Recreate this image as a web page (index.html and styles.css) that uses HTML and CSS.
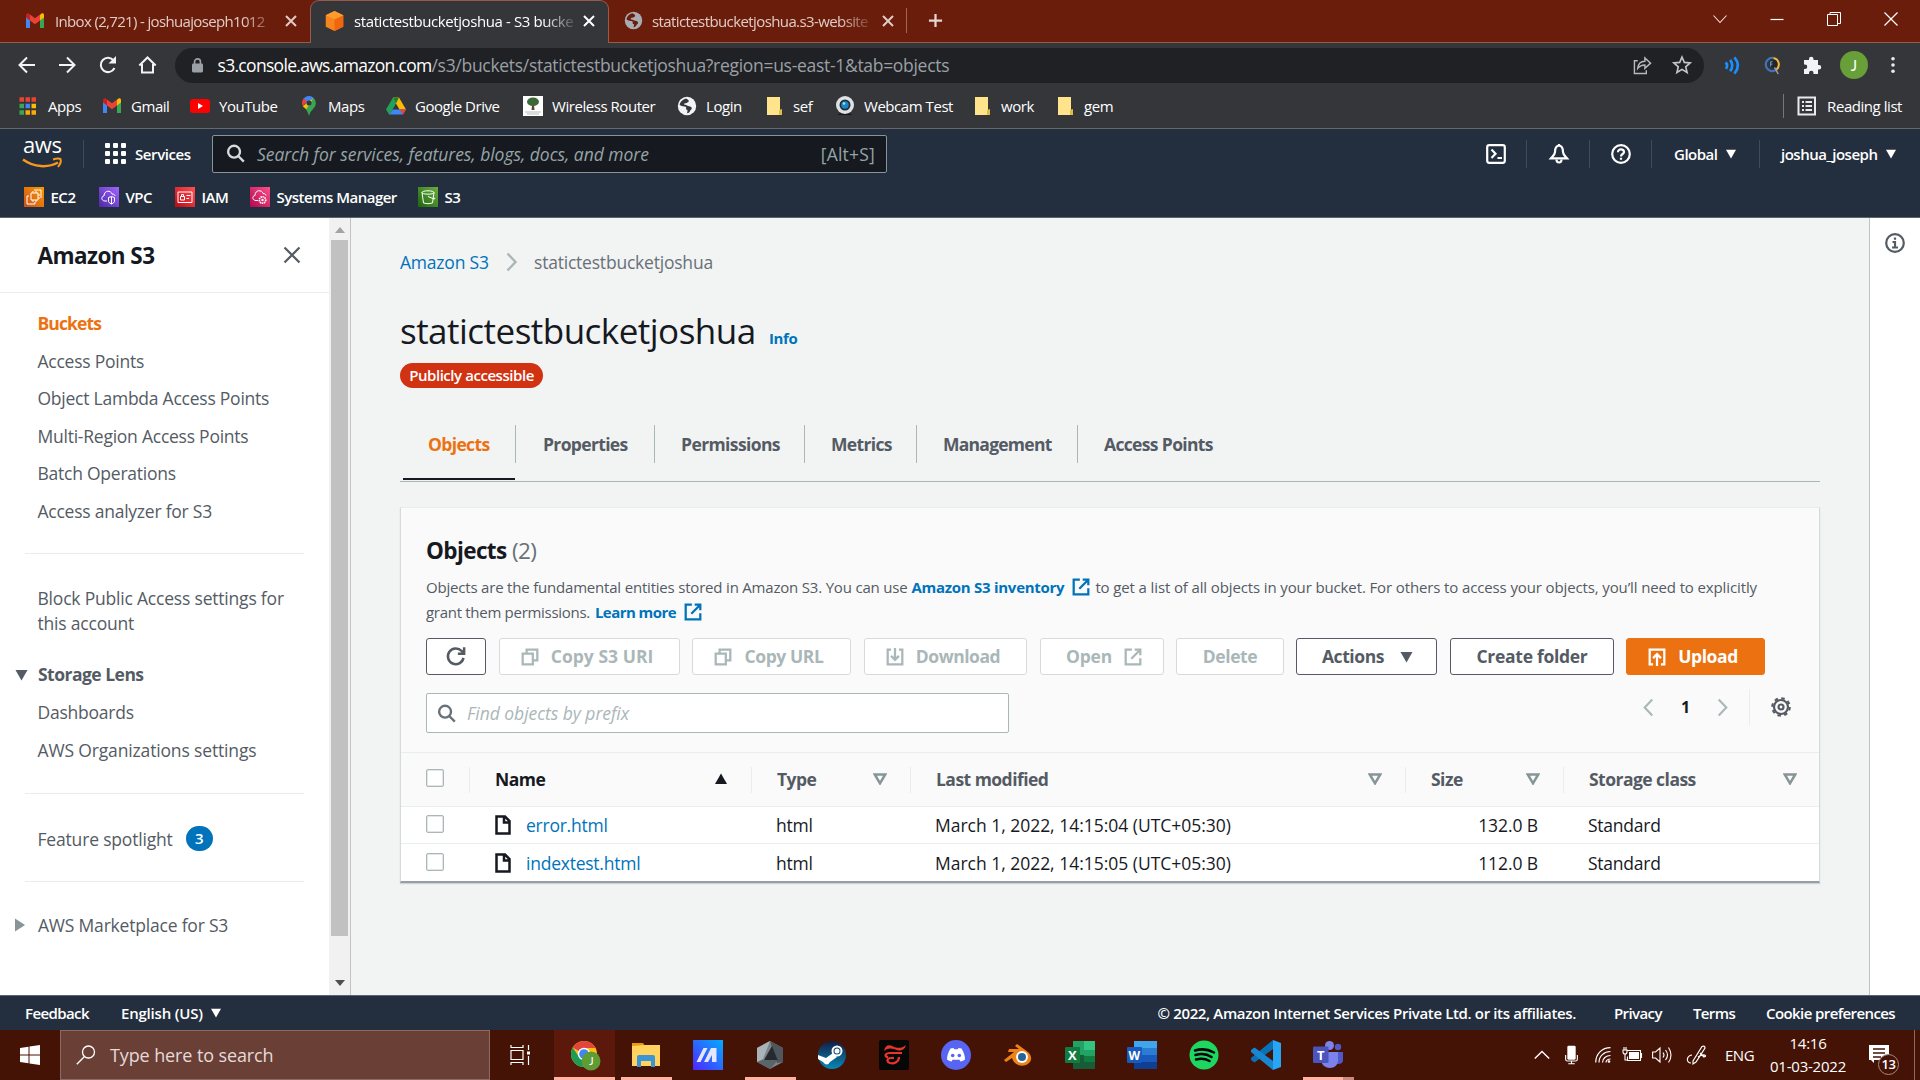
FILE: index.html
```html
<!DOCTYPE html>
<html lang="en">
<head>
<meta charset="utf-8">
<title>statictestbucketjoshua - S3 bucket</title>
<link rel="stylesheet" href="styles.css">
</head>
<body>
<svg class="defs" aria-hidden="true">
  <symbol id="globe" viewBox="0 0 20 20"><circle cx="10" cy="10" r="9.200" fill="currentColor"/><path d="M9 2.400C5.500 3.200 3 5.800 2.600 9c1.600 1 3.400 1.600 5.200 1.400 1.300 0 1.700 1 1.300 2-.3 1 .3 1.300 1.300 1.300.3 1-.1 2.400-.4 3.600 2-.2 3-1.600 3.400-3 .9-.6 1.600-1.300 1.300-2.500-.5-1.500-2.300-1.300-3.700-1.800C9.800 9.500 8.500 8.700 7 8.600c0-1.500 1.400-1.500 2.500-1.700C10.600 6.600 12 6 11.700 4.500 11.500 3.500 10 3.400 9 2.400z" fill="var(--hole)"/></symbol>
  <symbol id="gmail" viewBox="0 0 20 16"><path d="M1 2v13h4V6z" fill="#4285f4"/><path d="M15 6v9h4V2z" fill="#34a853"/><path d="M15 2v5.500l4-3V2c0-2-2-2.200-3-1.300z" fill="#fbbc04"/><path d="M5 1.500v6l5 3.800 5-3.800v-6l-5 3.800z" fill="#ea4335"/><path d="M1 2.500v2l4 3v-6l-1-.8C3-.2 1 .2 1 2.500z" fill="#c5221f"/></symbol>
  <symbol id="folder" viewBox="0 0 20 20"><path d="M3 1h13v13l2 1v4H3z" fill="#ffe48c"/><path d="M15 19v-5l3-1v6z" fill="#e3bd42"/></symbol>
  <symbol id="ext" viewBox="0 0 16 16"><path d="M7 1.500H1.500v13h13V9M9.500 1.500h5v5M14 2 6.500 9.500" fill="none" stroke="currentColor" stroke-width="2"/></symbol>
  <symbol id="copy" viewBox="0 0 16 16"><path d="M1.500 5h9v9.500h-9zM5 5V1.500h9.500V11H11" fill="none" stroke="currentColor" stroke-width="2"/></symbol>
  <symbol id="glass" viewBox="0 0 16 16"><circle cx="6.800" cy="6.500" r="5" fill="none" stroke="currentColor" stroke-width="2"/><path d="m10.500 10.300 4.500 4.500" stroke="currentColor" stroke-width="2"/></symbol>
  <symbol id="file" viewBox="0 0 16 20"><path d="M1.500 1.500h8.500l4.500 4.500v12.500h-13zM9 2v5.500h5.500" fill="none" stroke="currentColor" stroke-width="2.500"/></symbol>
  <symbol id="sort" viewBox="0 0 14 12"><path d="M1.800 1.500h10.400L7 10.300z" fill="none" stroke="#879596" stroke-width="2.500"/></symbol>
  <symbol id="caret" viewBox="0 0 12 12"><path d="M0 1h12L6 11.500z" fill="currentColor"/></symbol>
  <symbol id="cross" viewBox="0 0 12 12"><path d="m1 1 10 10M11 1 1 11" stroke="currentColor" stroke-width="2" fill="none"/></symbol>
</svg>

<header class="tabstrip">
  <div class="tab first"><svg class="fav" viewBox="0 0 20 16"><use href="#gmail"/></svg><span class="tab-title">Inbox (2,721) - joshuajoseph1012</span><svg class="x"><use href="#cross"/></svg></div>
  <div class="tab active"><svg class="cube" viewBox="0 0 21 24"><path d="M10.500 0 21 5v14l-10.500 5L0 19V5z" fill="#f6851f"/><path d="m10.500 10 10.500-5v14l-10.500 5z" fill="#f1660d"/><path d="M10.500 0 21 5l-10.500 5L0 5z" fill="#ff9c2b"/></svg><span class="tab-title">statictestbucketjoshua - S3 bucke</span><svg class="x"><use href="#cross"/></svg></div>
  <div class="tab last"><svg class="fav globe"><use href="#globe"/></svg><span class="tab-title">statictestbucketjoshua.s3-website</span><svg class="x"><use href="#cross"/></svg></div>
  <svg class="plus" viewBox="0 0 16 16"><path d="M8 1v14M1 8h14" stroke="#e6d5d1" stroke-width="2.400"/></svg>
  <div class="window">
    <svg viewBox="0 0 14 14"><path d="m.5 3.500 6.500 7 6.500-7" fill="none" stroke="#f3e3df" stroke-width="1.100"/></svg>
    <svg viewBox="0 0 14 14"><path d="M.5 7.500h13" stroke="#fff" stroke-width="1.200"/></svg>
    <svg viewBox="0 0 14 14"><path d="M.5 2.500h10v11H.5zM3 2.500v-2h10.500v11H11" fill="none" stroke="#fff"/></svg>
    <svg viewBox="0 0 14 14"><path d="m.5.5 13 13m0-13-13 13" fill="none" stroke="#fff" stroke-width="1.200"/></svg>
  </div>
</header>

<div class="toolbar">
  <svg class="tool" viewBox="0 0 20 20"><path d="M18 10H3m7-7.500L2.500 10l7.500 7.500" fill="none" stroke="currentColor" stroke-width="2"/></svg>
  <svg class="tool" viewBox="0 0 20 20"><path d="M2 10h15m-7-7.500 7.500 7.500-7.500 7.500" fill="none" stroke="currentColor" stroke-width="2"/></svg>
  <svg class="tool" viewBox="0 0 20 20"><path d="M17.500 13a7.200 7.200 0 1 1-.8-7.500" fill="none" stroke="currentColor" stroke-width="2"/><path d="M19 1v7.500h-7.500z" fill="currentColor"/></svg>
  <svg class="tool" viewBox="0 0 20 20"><path d="M5 9v8.500h11V9M2.300 10.500l8.200-8 8.200 8" fill="none" stroke="currentColor" stroke-width="2"/></svg>
  <div class="omnibox">
    <svg class="lock" viewBox="0 0 12 16"><path d="M2.800 7V4a3.200 3.200 0 0 1 6.400 0v3" fill="none" stroke="#9aa0a6" stroke-width="1.800"/><rect y="5.800" width="12" height="9.800" rx="1.500" fill="#9aa0a6"/></svg>
    <span class="host">s3.console.aws.amazon.com</span><span class="path">/s3/buckets/statictestbucketjoshua?region=us-east-1&amp;tab=objects</span>
    <svg class="share" viewBox="0 0 20 20"><path d="M5 5H1.500v13.500H14V15" fill="none" stroke="#b6b8ba" stroke-width="1.500"/><path d="M5 13c.5-5 3.500-7.500 7.500-7.500V2l6 5.500-6 5.500V9.500C9 9.500 7 10.500 5 13z" fill="none" stroke="#b6b8ba" stroke-width="1.500"/></svg>
    <svg class="star" viewBox="0 0 20 20"><path d="m10 2 2.300 5.400 5.900.5-4.500 3.900 1.400 5.700-5.100-3.100-5.100 3.100 1.400-5.700L1.800 7.900l5.900-.5z" fill="none" stroke="#c4c6c8" stroke-width="1.600"/></svg>
  </div>
  <svg class="wave" viewBox="0 0 18 20"><path d="M2 6.500q2.500 3.500 0 7M6.500 4q4.500 6 0 12M11 1.500q7.500 8.500 0 17" fill="none" stroke="#1a90ff" stroke-width="2.800"/></svg>
  <svg class="quill" viewBox="0 0 18 20"><path d="M9 2a7 7 0 1 0 3 12.500" fill="none" stroke="#4272b8" stroke-width="2.200"/><path d="M9 2a6.500 7 0 0 1 3 12.500" fill="none" stroke="#f5b83d" stroke-width="2.200"/><circle cx="9" cy="8.500" r="4.200" fill="#24262d"/><path d="M6 6v5m0-5h2M6 8.500h2" stroke="#57b2e4" fill="none"/><path d="m10 12 4 7" stroke="#9aa1a8" stroke-width="1.500"/></svg>
  <svg class="puzzle" viewBox="0 0 20 20"><path d="M2 5h5V4a2.200 2.200 0 0 1 4.500 0v1H16v5h1a2.200 2.200 0 0 1 0 4.500h-1V19h-4.500v-1a2 2 0 0 0-4.500 0v1H2v-5h1a2 2 0 0 0 0-4.500H2z" fill="#f1f3f4"/></svg>
  <span class="avatar">J</span>
  <svg class="dots" viewBox="0 0 6 20"><g fill="#e8eaed"><circle cx="3" cy="3" r="2"/><circle cx="3" cy="10" r="2"/><circle cx="3" cy="17" r="2"/></g></svg>
</div>

<nav class="bookmarks">
  <a><svg viewBox="0 0 20 20"><g stroke-width="4.500"><path d="M.5 3.500H5m1.500 0H11m1.500 0H17" stroke="#ea4335"/><path d="M.5 10H5" stroke="#34a853"/><path d="M6.500 10H11" stroke="#4285f4"/><path d="M12.500 10H17" stroke="#fbbc04"/><path d="M.5 16.500H5" stroke="#34a853"/><path d="M6.500 16.500H11m1.500 0H17" stroke="#fbab04"/></g></svg>Apps</a>
  <a><svg viewBox="0 0 20 16"><use href="#gmail"/></svg>Gmail</a>
  <a><svg viewBox="0 0 20 20"><rect y="3" width="20" height="14" rx="3" fill="#f00"/><path d="m8 7 5 3-5 3z" fill="#fff"/></svg>YouTube</a>
  <a><svg viewBox="0 0 20 20"><path d="M10 0c2 0 3.500.7 4.700 2.100L8 10 4 4A7 7 0 0 1 10 0z" fill="#4285f4"/><path d="M3.800 10 14.700 2.100 8 14C6 12 4.500 11.500 3.800 10z" fill="#fbbc04"/><path d="M14.700 2.100C17 4.500 17.500 8 16 10.500c-2 3-5 5-6 9.500-.7-2.500-1.500-4.500-3-6.500z" fill="#34a853"/><path d="M4.700 2.500 8 5.300 3.800 10a7 7 0 0 1 .9-7.500z" fill="#ea4335"/><circle cx="10" cy="7" r="2.500" fill="#35363a"/></svg>Maps</a>
  <a><svg viewBox="0 0 20 20"><path d="m7 1.500-7 12L3.500 19 10 7.500z" fill="#23a15a"/><path d="M7 1.500h6L20 13.500h-6.500L10 7.500z" fill="#fbbc04"/><path d="m3.500 18.500 3.300-5H20l-3.300 5z" fill="#4285f4"/><path d="m13.500 13.500 3.500 5 3-5z" fill="#ea4335"/><path d="M7 1.500h6l-3 6z" fill="#188038"/></svg>Google Drive</a>
  <a><svg viewBox="0 0 20 20"><rect width="20" height="20" fill="#fff"/><path d="M9.300 8h1.500l.8 6H8.500z" fill="#5c4632"/><ellipse cx="10" cy="5.700" rx="6" ry="4.300" fill="#3d6937"/><path d="M2 16h16M4 18h12" stroke="#b8b8b8"/></svg>Wireless Router</a>
  <a><svg class="login"><use href="#globe"/></svg>Login</a>
  <a><svg><use href="#folder"/></svg>sef</a>
  <a><svg viewBox="0 0 20 20"><path d="M2 19q8-5 16 0z" fill="#14171a"/><circle cx="10" cy="9" r="9" fill="#dfe2e4"/><circle cx="10" cy="9" r="5.500" fill="#252b33"/><circle cx="10" cy="9" r="3.800" fill="#1686c4"/><circle cx="9" cy="7.500" r="1.300" fill="#a7dcf5"/></svg>Webcam Test</a>
  <a><svg><use href="#folder"/></svg>work</a>
  <a><svg><use href="#folder"/></svg>gem</a>
  <a class="reading"><svg viewBox="0 0 20 20"><rect x="1.500" y="1.500" width="16.500" height="17" fill="none" stroke="#e8eaed" stroke-width="2"/><path d="M5 6h2m1.500 0H15M5 10h2m1.500 0H15M5 14h2m1.500 0H15" stroke="#e8eaed" stroke-width="2"/></svg>Reading list</a>
</nav>

<div class="aws-nav">
  <div class="aws-top">
    <div class="aws-logo"><span>aws</span><svg viewBox="0 0 40 11"><path d="M1 1.500C12 9.500 26 10 36 4.500" fill="none" stroke="#f7981d" stroke-width="2.500"/><path d="M31 1.500c3-1 6-1.300 7.500-.5.800 2-.5 5.500-2.500 8" fill="none" stroke="#f7981d" stroke-width="2"/></svg></div>
    <svg class="grid9" viewBox="0 0 21 21"><g fill="#fff"><rect width="5" height="5" rx="1"/><rect x="8" width="5" height="5" rx="1"/><rect x="16" width="5" height="5" rx="1"/><rect y="8" width="5" height="5" rx="1"/><rect x="8" y="8" width="5" height="5" rx="1"/><rect x="16" y="8" width="5" height="5" rx="1"/><rect y="16" width="5" height="5" rx="1"/><rect x="8" y="16" width="5" height="5" rx="1"/><rect x="16" y="16" width="5" height="5" rx="1"/></g></svg>
    <span class="services">Services</span>
    <div class="aws-search"><svg><use href="#glass"/></svg><i>Search for services, features, blogs, docs, and more</i><span>[Alt+S]</span></div>
    <div class="cell c1"><svg viewBox="0 0 20 20"><rect x="1.200" y="1.200" width="17.600" height="17.600" rx="2" fill="none" stroke="#fff" stroke-width="2.200"/><path d="m5.500 5.500 4 4.200-4 4.200M11.500 14H16" fill="none" stroke="#fff" stroke-width="2.200"/></svg></div>
    <div class="cell c2"><svg viewBox="0 0 20 20"><path d="M10 1.500C7 2 6 4.500 6 8c0 2.500-2 4-4 6.300h16C16 12 14 10.500 14 8c0-3.500-1-6-4-6.500z" fill="none" stroke="#fff" stroke-width="2.200"/><path d="M7.500 15.500a2.500 3 0 0 0 5 0M10 0v2" fill="none" stroke="#fff" stroke-width="2.200"/></svg></div>
    <div class="cell c3"><svg viewBox="0 0 20 20"><circle cx="10" cy="10" r="8.800" fill="none" stroke="#fff" stroke-width="2.200"/><path d="M7 8.200C7 4.200 13 4.500 13 8c0 2.200-3 1.800-3 4.500m0 1.300v2" fill="none" stroke="#fff" stroke-width="2.200"/></svg></div>
    <div class="cell c4">Global<svg class="caret"><use href="#caret"/></svg></div>
    <div class="cell c5">joshua_joseph<svg class="caret"><use href="#caret"/></svg></div>
  </div>
  <div class="favorites">
    <a><svg class="ec2" viewBox="0 0 20 20"><path d="M7 6h7v7H7zM9 4v2m3-2v2m-3 7v2m3-2v2m2-7h2m-2 3h2M10 3h7v8M3 9v8h8v-2M3 9h2" fill="none" stroke="#fff"/></svg>EC2</a>
    <a><svg class="vpc" viewBox="0 0 20 20"><path d="M8 14H6c-4 0-4-5-1-5 0-6 7-6 8-2 2 0 3 1 3 2" fill="none" stroke="#fff"/><path d="m12.500 9.500 3 1v4q-1 2-3 2.500-2-.5-3-2.500v-4zM12.500 10v7" fill="none" stroke="#fff"/></svg>VPC</a>
    <a><svg class="iam" viewBox="0 0 20 20"><path d="M3 5h14v10.500H3zM5.500 9.500h4v3.500h-4zM6.500 9V7.500h2V9M11.500 8.500h4m-4 3h2.500" fill="none" stroke="#fff"/></svg>IAM</a>
    <a><svg class="sysm" viewBox="0 0 20 20"><path d="M8 13.500H6c-4 0-4-5-1-5 0-6 7-6 8-2 2 0 3 1 3 2" fill="none" stroke="#fff"/><circle cx="12.500" cy="13" r="3.200" fill="none" stroke="#fff" stroke-width="1.600" stroke-dasharray="1.500 .6"/><circle cx="12.500" cy="13" r="1.200" fill="#fff"/></svg>Systems Manager</a>
    <a><svg class="s3" viewBox="0 0 20 20"><path d="M4 5.500 5.500 16q4.500 1.500 9 0L16 5.500M10 9.500l6 2.500q2-.2 0-1.500" fill="none" stroke="#fff"/><ellipse cx="10" cy="5.500" rx="6" ry="1.700" fill="none" stroke="#fff"/></svg>S3</a>
  </div>
</div>

<div class="content">
  <aside class="sidebar">
    <div class="side-head"><h2>Amazon S3</h2><svg viewBox="0 0 18 18"><path d="m1.500 1.500 15 15m0-15-15 15" stroke="#545b64" stroke-width="2.200"/></svg></div>
    <ul class="links first-links">
      <li class="selected">Buckets</li><li>Access Points</li><li>Object Lambda Access Points</li><li>Multi-Region Access Points</li><li>Batch Operations</li><li>Access analyzer for S3</li>
    </ul>
    <p class="block-access">Block Public Access settings for<br>this account</p>
    <ul class="links">
      <li class="section"><svg><use href="#caret"/></svg>Storage Lens</li><li>Dashboards</li><li class="org">AWS Organizations settings</li>
    </ul>
    <div class="feature">Feature spotlight<span>3</span></div>
    <div class="market"><svg viewBox="0 0 12 14"><path d="M0 0v14l11-7z" fill="#879596"/></svg>AWS Marketplace for S3</div>
  </aside>
  <div class="scrollbar"><svg viewBox="0 0 10 6"><path d="m0 6 5-6 5 6z" fill="#a3a3a3"/></svg><div class="thumb"></div><svg viewBox="0 0 10 6"><path d="m0 0 5 6 5-6z" fill="#505050"/></svg></div>

  <main>
    <div class="crumbs"><a>Amazon S3</a><svg viewBox="0 0 12 20"><path d="m1.500 1.500 8 8.500-8 8.500" fill="none" stroke="#aab7b8" stroke-width="2.400"/></svg><span>statictestbucketjoshua</span></div>
    <div class="title"><h1>statictestbucketjoshua</h1><a>Info</a></div>
    <span class="badge">Publicly accessible</span>
    <div class="page-tabs"><div class="on">Objects</div><div class="w139">Properties</div><div class="w149">Permissions</div><div class="w112">Metrics</div><div class="w161">Management</div><div>Access Points</div></div>

    <section class="panel">
      <div class="panel-head">
        <h3>Objects <span>(2)</span></h3>
        <div class="desc"><span class="d1">Objects are the fundamental entities stored in Amazon S3. You can use</span><a>Amazon S3 inventory</a><svg><use href="#ext"/></svg><span class="d2">to get a list of all objects in your bucket. For others to access your objects, you’ll need to explicitly</span></div>
        <div class="desc second"><span class="d3">grant them permissions.</span><a>Learn more</a><svg><use href="#ext"/></svg></div>
        <div class="buttons">
          <button class="on b-refresh"><svg viewBox="0 0 16 16"><path d="M14 9.500A6.300 6.300 0 1 1 12.500 4L14 5.500M14.500 1v5.200H9.500" fill="none" stroke="currentColor" stroke-width="2"/></svg></button>
          <button class="b-uri"><svg><use href="#copy"/></svg>Copy S3 URI</button>
          <button class="b-url"><svg><use href="#copy"/></svg>Copy URL</button>
          <button class="b-down"><svg viewBox="0 0 16 16"><path d="M4.500 1.500h-3v13h13v-13h-3M8 0v10M4.500 7 8 10.500 11.500 7" fill="none" stroke="currentColor" stroke-width="2"/></svg>Download</button>
          <button class="b-open">Open<svg><use href="#ext"/></svg></button>
          <button class="b-del">Delete</button>
          <button class="on b-act">Actions<svg class="tri"><use href="#caret"/></svg></button>
          <button class="on b-create">Create folder</button>
          <button class="b-upload"><svg viewBox="0 0 16 16"><path d="M4.500 14.500h-3v-13h13v13h-3M8 16V6M4.500 9 8 5.500 11.500 9" fill="none" stroke="currentColor" stroke-width="2"/></svg>Upload</button>
        </div>
        <div class="finder">
          <div class="find"><svg><use href="#glass"/></svg><i>Find objects by prefix</i></div>
          <div class="pager">
            <svg viewBox="0 0 12 20"><path d="m10.500 1.500-8 8.500 8 8.500" fill="none" stroke="#aab7b8" stroke-width="2.200"/></svg>
            <span>1</span>
            <svg viewBox="0 0 12 20"><path d="m1.500 1.500 8 8.500-8 8.500" fill="none" stroke="#aab7b8" stroke-width="2.200"/></svg>
          </div>
          <div class="gear"><svg viewBox="0 0 20 20"><circle cx="10" cy="10" r="7" fill="none" stroke="#545b64" stroke-width="2.200"/><circle cx="10" cy="10" r="8.800" fill="none" stroke="#545b64" stroke-width="2" stroke-dasharray="3.500 3.410"/><circle cx="10" cy="10" r="2.500" fill="none" stroke="#545b64" stroke-width="2.200"/></svg></div>
        </div>
      </div>
      <div class="row head">
        <div class="pick"><span class="box"></span></div>
        <div class="name">Name<svg viewBox="0 0 12 12"><path d="M0 11h12L6 .5z" fill="#16191f"/></svg></div>
        <div>Type<svg><use href="#sort"/></svg></div><div>Last modified<svg><use href="#sort"/></svg></div><div>Size<svg><use href="#sort"/></svg></div><div>Storage class<svg><use href="#sort"/></svg></div>
      </div>
      <div class="row"><div class="pick"><span class="box"></span></div><div class="file"><svg><use href="#file"/></svg><a>error.html</a></div><div>html</div><div class="date">March 1, 2022, 14:15:04 (UTC+05:30)</div><div class="size">132.0 B</div><div>Standard</div></div>
      <div class="row"><div class="pick"><span class="box"></span></div><div class="file"><svg><use href="#file"/></svg><a>indextest.html</a></div><div>html</div><div class="date">March 1, 2022, 14:15:05 (UTC+05:30)</div><div class="size">112.0 B</div><div>Standard</div></div>
    </section>
  </main>
  <aside class="info"><svg viewBox="0 0 20 20"><circle cx="10" cy="10" r="8.800" fill="none" stroke="#545b64" stroke-width="2.200"/><path d="M10 4.500v2.300M7.500 9H10v5.500M7 14.500h6" fill="none" stroke="#545b64" stroke-width="2.200"/></svg></aside>
</div>

<footer class="aws-foot"><span class="f1">Feedback</span><span class="f2">English (US)</span><svg><use href="#caret"/></svg><span class="f3">© 2022, Amazon Internet Services Private Ltd. or its affiliates.</span><span class="f4">Privacy</span><span class="f5">Terms</span><span class="f6">Cookie preferences</span></footer>

<div class="taskbar">
  <div class="start"><svg viewBox="0 0 20 20"><path d="M0 3 8.500 1.800v7.700H0zM9.500 1.600 20 0v9.500H9.500zM0 10.500h8.500v7.700L0 17zM9.500 10.500H20V20L9.500 18.400z" fill="#fff"/></svg></div>
  <div class="win-search"><svg viewBox="0 0 20 20"><circle cx="12.500" cy="7" r="6" fill="none" stroke="#fff" stroke-width="1.300"/><path d="M8.500 11.500.8 19.200" stroke="#fff" stroke-width="1.300"/></svg>Type here to search</div>
  <div class="taskview"><svg viewBox="0 0 20 20"><path d="M1 5.500h12v9H1zM1 0v2.500h12V0M1 20v-2.500h12V20M18.500 0v5M18.500 11v9" fill="none" stroke="#fff" stroke-width="1.200"/><path d="M17 6.500h3v3h-3z" fill="#fff"/></svg></div>
  <div class="app focused"><svg viewBox="0 0 30 30"><circle cx="14" cy="14" r="13" fill="#fbc116"/><path d="M2.700 7.500A13 13 0 0 0 13 27l6.500-10L9 17z" fill="#1c9c54"/><path d="M14 14 2.700 7.500A13 13 0 0 1 25.500 8H14z" fill="#e2453a"/><circle cx="14" cy="14" r="6.200" fill="#fff"/><circle cx="14" cy="14" r="4.800" fill="#4285f4"/><circle cx="21" cy="21" r="9.500" fill="#5f9c35"/><text x="19" y="25" class="svg-j">J</text></svg></div>
  <div class="app run"><svg viewBox="0 0 30 30"><path d="M1 3h11l2 3H1z" fill="#e59d09"/><path d="M1 6l13-1h15v21H1z" fill="#ffd35e"/><path d="M6 26V17q0-2 2-2h14q2 0 2 2v10h-4v-6H10v6H6z" fill="#3b95d4"/></svg></div>
  <div class="app"><svg viewBox="0 0 30 30"><defs><linearGradient id="a" x1="0" y1="1" x2="1" y2="0"><stop stop-color="#5124ff"/><stop offset=".6" stop-color="#2277ff"/><stop offset="1" stop-color="#00adff"/></linearGradient></defs><path fill="url(#a)" d="M0 0h30v30H0z"/><path d="m3.500 22 7-14h4l-7 14zM11 22l7-14h5.500v14H19v-7l-4 7z" fill="#e6e5ff"/></svg></div>
  <div class="app run"><svg viewBox="0 0 30 30"><path d="M15 1 28 8v14l-13 7-13-7V8z" fill="#7b858c"/><path d="M15 1 28 8v14l-6 1z" fill="#4e575d"/><path d="M2 8 15 1l-7 18-6 3z" fill="#a9b3b9"/><path d="m17 6 6 15-14-1z" fill="#252a2e"/><path d="M8 20h15l-8 9-13-7z" fill="#59646b"/></svg></div>
  <div class="app"><svg viewBox="0 0 30 30"><defs><linearGradient id="s" x2="0" y2="1"><stop stop-color="#151c42"/><stop offset="1" stop-color="#0689b8"/></linearGradient></defs><circle cx="15" cy="15" r="14" fill="url(#s)"/><circle cx="20" cy="11" r="4.500" fill="none" stroke="#fff" stroke-width="2"/><circle cx="20" cy="11" r="2.500" fill="#fff"/><path d="m1 15 8 3 7-5 4 4-7 5q-3 5-7 0L1 19z" fill="#fff"/></svg></div>
  <div class="app"><svg viewBox="0 0 30 30"><rect width="30" height="30" rx="2" fill="#080707"/><path d="M5 11C6 5 10 4 14 6.500c4 2 9 2 13-1.500-1 4-4 6-8 5.500L15 9c-3-1-7-1-10 2z" fill="#e8342a"/><path d="M23 13H11c-5 0-6 4-2 4M20 17c0 5-5 7-9 6-4-1.500-3-5 1-5h3" fill="none" stroke="#e8342a" stroke-width="2.200"/></svg></div>
  <div class="app"><svg viewBox="0 0 30 30"><circle cx="15" cy="15" r="15" fill="#5865f2"/><path d="M9.500 8.500 12.500 8l.7 1.200h3.600l.7-1.200 3 .5c2 3 3.500 7 3.500 11-1.500 1.200-3 1.800-4.500 2l-1-1.800h-7l-1 1.800c-1.500-.2-3-.8-4.500-2 0-4 1.500-8 3.500-11z" fill="#fff"/><circle cx="11.700" cy="15.500" r="1.800" fill="#5865f2"/><circle cx="18.300" cy="15.500" r="1.800" fill="#5865f2"/></svg></div>
  <div class="app"><svg viewBox="0 0 30 30"><path d="m1 20 10-8H5l1-3h10l-4-3 2-2 11 8c4 4 4 8 1 11-5 5-15 3-17-5l-6 4z" fill="#ef8216"/><circle cx="19" cy="17" r="6" fill="#fff"/><circle cx="19" cy="17" r="4" fill="#2a6396"/></svg></div>
  <div class="app"><svg viewBox="0 0 30 30"><path d="M8 1h11v28H8z" fill="#21a366"/><path d="M19 1h11v9H19z" fill="#33c481"/><path d="M8 15h22v14H8z" fill="#185c37"/><path d="M19 10h11v6H19z" fill="#21a366"/><path d="M19 16h11v6H19z" fill="#107c41"/><rect y="7" width="15" height="16" rx="1" fill="#107c41"/><text x="3" y="20" class="svg-l">X</text></svg></div>
  <div class="app"><svg viewBox="0 0 30 30"><path d="M7 1h23v7H7z" fill="#41a5ee"/><path d="M7 8h23v7H7z" fill="#2b7cd3"/><path d="M7 15h23v7H7z" fill="#185abd"/><path d="M7 22h23v7H7z" fill="#103f91"/><rect y="7" width="15" height="16" rx="1" fill="#185abd"/><text x="1.500" y="19.500" class="svg-l w">W</text></svg></div>
  <div class="app"><svg viewBox="0 0 30 30"><circle cx="15" cy="15" r="14.500" fill="#1ed760"/><path d="M6 10.500q10-3 19 2M6.500 15q9-2.500 16 2M7 19.500q7.500-2 13.500 1.500" fill="none" stroke="#000" stroke-width="2.500" stroke-linecap="round"/></svg></div>
  <div class="app"><svg viewBox="0 0 30 30"><path d="M22 0v9L3.500 22.500 0 20v-2z" fill="#0b71b7"/><path d="M0 10 3.500 7.500 22 21v9L0 12z" fill="#1887d1"/><path d="m22 0 8 3v24l-8 3z" fill="#28a5f5"/></svg></div>
  <div class="app run two"><svg viewBox="0 0 30 30"><circle cx="25" cy="7" r="3.200" fill="#5059c9"/><path d="M20 12h10v8q0 4-5 4h-5z" fill="#5059c9"/><circle cx="16.500" cy="5.500" r="4.500" fill="#7b83eb"/><path d="M8 12h17v9q-1 7-8 7t-9-7z" fill="#7b83eb"/><rect y="6.500" width="15.500" height="16.500" rx="1" fill="#4b53bc"/><text x="4" y="19.500" class="svg-l">T</text></svg></div>
  <div class="tray">
    <svg class="t1" viewBox="0 0 16 10"><path d="m.8 8.500 7.200-7 7.200 7" fill="none" stroke="#fff" stroke-width="1.400"/></svg>
    <svg class="t2" viewBox="0 0 14 20"><rect x="2.500" width="9" height="15" rx="1.500" fill="#fff"/><path d="M.7 10v4.500q0 2 2 2h8.600q2 0 2-2V10M7 17v2.500M3.500 19.400h7" fill="none" stroke="#fff" stroke-width="1.200"/></svg>
    <svg class="t3" viewBox="0 0 16 16"><path d="M.7 15.500C.7 7 7 .7 15.500.7M4 15.500C4 9 9 4.500 15.500 4.500M7.500 15.500c0-4 3.500-7 8-7M11 15.500c0-2 2-3.500 4.500-3.500" fill="none" stroke="#fff" stroke-width="1.200"/><circle cx="14" cy="14.500" r="1.300" fill="#fff"/></svg>
    <svg class="t4" viewBox="0 0 20 16"><path d="M5.500 3.500h13v10h-13v-4M18.500 6.500h1v4h-1M1 3h4v2q0 2-2 2T1 5zM2 3V0m2 3V0M3 7v6h3" fill="none" stroke="#fff" stroke-width="1.100"/><path d="M7 5h10v7H7z" fill="#fff"/></svg>
    <svg class="t5" viewBox="0 0 20 18"><path d="M.6 6v6h3L8 16V2L3.500 6zM11 6.500q2 2.500 0 5M13.500 4q4 5 0 10M16.500 1.500q5 7.500 0 15" fill="none" stroke="#fff" stroke-width="1.100"/></svg>
    <svg class="t6" viewBox="0 0 20 20"><path d="M6 16 15 1.500q3-1 3 1.500L9 17l-3 2zM5 10c-6 1-6 8-1 8M11 12c6-4 10-1 6 0l-4-4" fill="none" stroke="#fff" stroke-width="1.200"/></svg>
    <span class="lang">ENG</span>
    <div class="clock"><span>14:16</span><span>01-03-2022</span></div>
    <div class="notice"><svg viewBox="0 0 20 18"><path d="M0 0h20v15H5v3l-3-3H0z" fill="#fff"/><path d="M4 4h12M4 8h12M4 12h8" stroke="#441306" stroke-width="1.400"/></svg><span>13</span></div>
  </div>
</div>
</body>
</html>
```
FILE: styles.css
```css
* { box-sizing: border-box; }
body { margin: 0; width: 1920px; height: 1080px; overflow: hidden; font-family: "Open Sans", "Noto Sans", sans-serif; white-space: nowrap; color: #16191f; }
h1, h2, h3, p, ul { margin: 0; padding: 0; font-weight: 400; }
ul { list-style: none; }
svg { display: block; flex: none; overflow: visible; }
a { text-decoration: none; }
.defs { display: none; }

/* Browser window */
.tabstrip { display: flex; height: 43px; background: #6b1d0b; border-bottom: 1px solid #99594b; font-size: 15px; color: #e0cbc6; }
.tab { display: flex; align-items: center; height: 41px; }
.tab-title { -webkit-mask-image: linear-gradient(90deg, #000 86%, rgba(0, 0, 0, .15)); mask-image: linear-gradient(90deg, #000 86%, rgba(0, 0, 0, .15)); }
.tab .x { width: 12px; height: 12px; margin-left: 11px; }
.tab.first { width: 310px; padding-left: 25px; }
.first .fav { width: 20px; height: 16px; margin-right: 10px; }
.first .tab-title { width: 219px; letter-spacing: -.66px; }
.tab.active { width: 299px; height: 43px; padding: 0 0 2px 13px; background: #35363a; border: 1px solid #99594b; border-bottom: 0; border-radius: 9px 9px 0 0; color: #fff; }
.cube { width: 21px; height: 20px; margin-right: 9px; }
.active .tab-title { width: 220px; letter-spacing: -.4px; }
.active .x { margin-left: 9px; }
.tab.last { width: 298px; padding-left: 15px; }
.globe { width: 19px; height: 19px; margin-right: 9px; color: #a9adb2; --hole: #6b1d0b; }
.last .tab-title { width: 219px; letter-spacing: -.6px; }
.tab.last::after { content: ""; width: 1px; height: 25px; margin-left: 12px; background: #9f6558; }
.plus { width: 15px; height: 15px; margin: 13px 0 0 21px; }
.window { display: flex; align-items: center; gap: 43px; height: 38px; margin-left: auto; padding-right: 22px; }
.window svg { width: 14px; height: 14px; }

.toolbar { display: flex; align-items: center; height: 45px; background: #35363a; padding: 0 0 1px 17px; color: #f1f3f4; }
.tool { width: 20px; height: 20px; margin-right: 20px; }
.omnibox { display: flex; align-items: center; width: 1529px; height: 35px; margin-left: -2px; border-radius: 18px; background: #202124; font-size: 17.500px; }
.lock { width: 11px; height: 15px; margin: 0 14.500px 0 17px; }
.host { width: 214px; color: #fff; letter-spacing: -.69px; }
.path { color: #9aa0a6; letter-spacing: -.3px; }
.share { width: 19px; height: 19px; margin-left: auto; }
.star { width: 20px; height: 20px; margin: 0 12px 0 20px; }
.wave { width: 17px; height: 19px; margin-left: 20px; }
.quill { width: 17px; height: 19px; margin-left: 24px; }
.puzzle { width: 20px; height: 20px; margin-left: 20px; }
.avatar { width: 28px; height: 28px; margin-left: 18px; border-radius: 50%; background: #689f38; color: #fff; font: 15px/28px Lato, sans-serif; text-align: center; }
.dots { width: 6px; height: 18px; margin-left: 22px; }

.bookmarks { display: grid; grid-template-columns: 83px 88px 109px 87px 137px 154px 87px 71px 137px 83px 70px 1fr; align-items: center; height: 41px; padding: 0 0 5px 19px; background: #35363a; border-bottom: 1px solid #66686c; color: #fff; font-size: 15px; letter-spacing: -.45px; }
.bookmarks a { display: flex; align-items: center; gap: 9px; height: 22px; line-height: 20px; }
.bookmarks svg { width: 20px; height: 20px; }
.bookmarks .login { color: #f1f3f4; --hole: #35363a; }
.bookmarks .reading { justify-self: end; gap: 10px; height: 24px; margin-right: 18px; padding-left: 13px; border-left: 1px solid #75777b; }

/* AWS header */
.aws-nav { height: 89px; background: #232f3e; border-bottom: 1px solid #596570; color: #fff; font-size: 15px; font-weight: 600; letter-spacing: -.5px; }
.aws-top { display: flex; height: 49px; padding-left: 22px; align-items: center; }
.aws-logo { width: 62px; height: 28px; border-right: 1px solid #414b58; }
.aws-logo span { display: block; height: 18px; font-size: 22px; font-weight: 500; line-height: 9px; letter-spacing: -.4px; padding-left: 1px; }
.aws-logo svg { width: 40px; height: 11px; }
.grid9 { width: 21px; height: 21px; margin: 0 9px 0 21px; }
.services { width: 77px; padding-top: 1px; letter-spacing: -.4px; }
.aws-search { display: flex; align-items: center; width: 675px; height: 38px; border: 1px solid #879596; border-radius: 2px; background: #16191f; color: #95a5a6; font-size: 17.500px; font-weight: 400; letter-spacing: -.04px; }
.aws-search svg { width: 19px; height: 19px; margin: 0 12px 0 13px; color: #d5dbdb; }
.aws-search span { margin: 0 11px 0 auto; letter-spacing: .2px; }
.cell { display: flex; align-items: center; justify-content: center; height: 28px; border-right: 1px solid #414b58; }
.cell svg { width: 20px; height: 20px; }
.c1 { width: 62px; margin-left: 578px; }
.c2 { width: 63px; padding-left: 1px; }
.c3 { width: 62px; }
.c4 { width: 108px; justify-content: flex-start; padding-left: 22px; }
.c5 { justify-content: flex-start; padding-left: 21px; border: 0; }
.cell .caret { width: 10px; height: 10px; margin-left: 9px; }
.favorites { display: grid; grid-template-columns: 75px 76px 75px 168px 70px; align-items: center; height: 38px; padding-left: 24px; }
.favorites a { display: flex; align-items: center; gap: 6.500px; }
.favorites svg { width: 20px; height: 20px; }
.ec2 { background: linear-gradient(45deg, #c8511b, #f90); }
.vpc { background: linear-gradient(45deg, #4d27a8, #a166ff); }
.iam { background: linear-gradient(45deg, #bd0816, #ff5252); }
.sysm { background: linear-gradient(45deg, #b0084d, #ff4f8b); }
.s3 { background: linear-gradient(45deg, #1b660f, #6cae3e); }

/* Console body */
.content { display: flex; height: 777px; background: #f2f3f3; font-size: 17.500px; letter-spacing: -.24px; }
.sidebar { width: 329px; background: #fff; color: #545b64; }
.side-head { display: flex; align-items: center; justify-content: space-between; height: 75px; padding: 0 28px 0 37.500px; border-bottom: 1px solid #eaeded; }
.side-head h2 { color: #16191f; font-size: 22.500px; font-weight: 700; letter-spacing: -.56px; }
.side-head svg { width: 18px; height: 18px; }
.links li { height: 37.500px; padding-left: 37.500px; line-height: 37.500px; }
.first-links { padding: 12px 0 23px; }
.first-links .selected { color: #ec7211; font-weight: 700; letter-spacing: -.9px; }
.block-access { margin: 0 25px; padding: 32px 0 20px 12.500px; border-top: 1px solid #eaeded; line-height: 25px; letter-spacing: -.2px; }
.links .section { display: flex; align-items: center; gap: 10px; height: 38px; padding-left: 15px; font-weight: 700; letter-spacing: -.52px; }
.section svg { width: 13px; height: 12px; }
.links .org { letter-spacing: -.15px; }
.feature, .market { display: flex; align-items: center; height: 88px; margin: 24px 25px 0; padding-left: 12.500px; border-top: 1px solid #eaeded; }
.feature { padding-top: 2px; letter-spacing: -.18px; }
.feature span { width: 27px; height: 25px; margin-left: 13px; border-radius: 13px; background: #0073bb; color: #fff; font-size: 15px; line-height: 25px; text-align: center; font-weight: 600; }
.market { margin-top: 0; padding-left: 0; height: 87px; letter-spacing: -.2px; }
.market svg { width: 11px; height: 14px; margin: 0 12px 0 -10px; }
.scrollbar { display: flex; flex-direction: column; align-items: center; justify-content: space-between; width: 22px; padding: 9px 0 9px; background: #f1f1f1; border-right: 1px solid #bdc5c6; }
.scrollbar svg { width: 10px; height: 6px; }
.thumb { width: 17px; height: 696px; margin-bottom: 38px; background: #c1c1c1; }

main { width: 1518px; padding-left: 49px; }
.crumbs { display: flex; align-items: center; height: 88px; color: #687078; letter-spacing: -.21px; }
.crumbs a { width: 106px; color: #0073bb; }
.crumbs svg { width: 12px; height: 20px; margin-right: 16px; }
.title { display: flex; height: 57px; align-items: baseline; line-height: 50px; }
h1 { width: 369px; font-size: 35px; letter-spacing: -.52px; }
.title a { color: #0073bb; font-size: 15px; font-weight: 700; letter-spacing: -.4px; }
.badge { display: block; width: 143px; height: 25px; border-radius: 13px; background: #d13212; color: #fff; font-size: 15px; font-weight: 600; line-height: 25px; text-align: center; letter-spacing: -.45px; }
.page-tabs { display: flex; align-items: flex-start; width: 1420px; height: 94px; padding: 37px 0 0 3px; border-bottom: 1px solid #aab7b8; color: #545b64; font-weight: 700; letter-spacing: -.65px; }
.page-tabs div { height: 38px; padding: 0 0 0 26px; border-left: 1px solid #aab7b8; line-height: 38px; }
.page-tabs .on { position: relative; width: 112px; padding-left: 25px; border: 0; color: #ec7211; }
.page-tabs .on::after { content: ""; position: absolute; left: 0; bottom: -17px; width: 112px; height: 2px; background: #16191f; }
.page-tabs .w139 { width: 139px; padding-left: 27px; }
.page-tabs .w149 { width: 150px; letter-spacing: -.6px; }
.page-tabs .w112 { width: 112px; }
.page-tabs .w161 { width: 161px; letter-spacing: -.75px; }

.panel { width: 1420px; height: 376px; margin-top: 25px; background: #fff; border: 1px solid #d5dbdb; border-top-color: #eaeded; border-bottom: 2px solid #969fa3; box-shadow: 0 1px 1px rgba(0, 28, 36, .15); }
.panel-head { height: 245px; padding: 23px 0 0 25px; background: #fafafa; border-bottom: 1px solid #eaeded; }
h3 { height: 43px; font-size: 22.500px; line-height: 40px; font-weight: 700; letter-spacing: -.6px; }
h3 span { font-weight: 400; color: #687078; }
.desc { display: flex; align-items: center; height: 25px; font-size: 15px; color: #545b64; letter-spacing: -.195px; }
.desc a { font-weight: 700; color: #0073bb; letter-spacing: -.27px; margin-left: 4px; }
.desc svg { width: 18px; height: 18px; margin: 0 5px 0 8px; color: #0073bb; }
.d2 { letter-spacing: -.125px; }
.d3 { letter-spacing: -.29px; }
.second a { letter-spacing: -.55px; margin-left: 5px; }
.buttons { display: flex; margin-top: 14px; }
button { display: flex; align-items: center; justify-content: center; height: 37px; margin: 0; padding: 0 5px 1px 0; border: 1px solid #d5dbdb; border-radius: 3px; background: #fff; color: #aab7b8; font: 700 17.500px "Open Sans", sans-serif; letter-spacing: -.4px; }
button svg { width: 18px; height: 18px; margin: 1px 12px 0 0; }
button.on { border-color: #545b64; color: #545b64; }
.b-refresh { width: 60px; margin-right: 13px; padding-right: 0; }
.b-refresh svg { width: 20px; height: 20px; margin: 0; }
.b-uri { width: 181px; margin-right: 12px; letter-spacing: .02px; }
.b-url { width: 159px; margin-right: 13px; }
.b-down { width: 163px; margin-right: 13px; letter-spacing: -.45px; }
.b-open { width: 124px; margin-right: 12px; padding: 0 0 1px 4px; letter-spacing: -.2px; }
.b-open svg { margin: 1px 0 0 12px; }
.b-del { width: 108px; margin-right: 12px; padding-right: 0; }
.b-act { width: 141px; margin-right: 13px; padding-right: 0; }
.b-act .tri { width: 13px; height: 12px; margin: 2px -2px 0 16px; }
.b-create { width: 164px; margin-right: 12px; padding-right: 0; letter-spacing: -.29px; }
.b-upload { width: 139px; background: #ec7211; border-color: #ec7211; color: #fff; }
.finder { display: flex; height: 40px; margin-top: 18px; }
.find { display: flex; align-items: center; width: 583px; height: 40px; border: 1px solid #aab7b8; border-radius: 2px; background: #fff; color: #aab7b8; letter-spacing: -.05px; }
.find svg { width: 19px; height: 19px; margin: 0 11px 0 10px; color: #687078; }
.pager { display: flex; align-items: center; height: 28px; margin-left: 633px; }
.pager svg { width: 12px; height: 19px; }
.pager span { width: 63px; text-align: center; font-size: 16px; font-weight: 700; }
.gear { display: flex; align-items: center; height: 36px; margin: -4px 0 0 20px; padding-left: 21px; border-left: 1px solid #eaeded; }
.gear svg { width: 20px; height: 20px; }
.row { display: grid; grid-template-columns: 68px 282px 159px 495px 158px 1fr; height: 37px; align-items: center; border-bottom: 1px solid #eaeded; }
.row:last-child { height: 38px; border: 0; }
.row > div { padding-left: 25px; }
.row.head { height: 54px; background: #fafafa; color: #545b64; font-weight: 700; letter-spacing: -.53px; }
.head > div { display: flex; align-items: center; justify-content: space-between; height: 26px; padding-right: 23px; border-left: 1px solid #eaeded; line-height: 24px; padding-bottom: 1px; }
.row.head .pick { border: 0; padding-left: 25px; }
.head .name { color: #16191f; padding-right: 23px; }
.head svg { width: 14px; height: 12px; }
.head > div:last-child { padding-right: 22px; }
.box { display: block; width: 18px; height: 18px; margin: -3px 0 0; border: 1px solid #aab7b8; border-radius: 2px; background: #fff; box-shadow: inset 0 0 0 .5px #c4cece; }
.file { display: flex; align-items: center; }
.file svg { width: 16px; height: 20px; margin: 0 15px 0 1px; }
.file a { color: #0073bb; }
.row .date { letter-spacing: -.02px; }
.row .size { padding: 0 25px 0 0; text-align: right; letter-spacing: -.1px; }
.info { width: 51px; padding: 15px 0 0 15px; background: #fff; border-left: 1px solid #bdc5c6; }
.info svg { width: 20px; height: 20px; }

.aws-foot { display: flex; align-items: center; height: 35px; padding-left: 25px; background: #232f3e; border-top: 1px solid #596570; color: #fff; font-size: 15px; font-weight: 600; letter-spacing: -.6px; }
.f1 { width: 96px; }
.f2 { letter-spacing: -.2px; }
.aws-foot svg { width: 10px; height: 10px; margin-left: 8px; }
.f3 { margin-left: auto; letter-spacing: -.36px; }
.f4 { margin-left: 38px; }
.f5 { margin-left: 31px; }
.f6 { margin: 0 25px 0 31px; }

/* Windows taskbar */
.taskbar { display: flex; height: 50px; background: #441306; color: #fff; }
.start { display: flex; align-items: center; justify-content: center; width: 60px; }
.start svg { width: 20px; height: 20px; }
.win-search { display: flex; align-items: center; gap: 14px; width: 430px; padding-left: 15px; background: #693f36; border: 1px solid #8d6a62; color: #e5dad8; font-size: 18px; letter-spacing: -.11px; }
.win-search svg { width: 20px; height: 20px; }
.taskview { width: 64px; padding: 15px 0 0 20px; }
.taskview svg { width: 20px; height: 20px; }
.app { position: relative; display: flex; align-items: center; justify-content: center; width: 62px; padding-right: 2px; }
.app svg { width: 30px; height: 30px; }
.app.focused { width: 61px; margin-right: 1px; padding-right: 0; background: #5c180b; box-shadow: inset 0 -3px #ffb1a2; }
.run::after { content: ""; position: absolute; left: 5px; bottom: 0; width: 51px; height: 3px; background: #ffb1a2; }
.two::after { background: linear-gradient(90deg, #ffb1a2 40px, #c98a80 40px); }
.svg-j { font: 11px Lato, sans-serif; fill: #fff; }
.svg-l { font: 700 13px "Open Sans", sans-serif; fill: #fff; }
.svg-l.w { font-size: 12px; }
.tray { display: flex; align-items: center; margin-left: auto; padding-right: 5px; }
.tray::after { content: ""; width: 1px; height: 50px; margin-left: 14px; background: #8b6a61; }
.t1 { width: 16px; height: 10px; margin-right: 15px; }
.t2 { width: 13px; height: 20px; margin-right: 17px; }
.t3 { width: 16px; height: 16px; margin-right: 11px; }
.t4 { width: 20px; height: 16px; margin-right: 10px; }
.t5 { width: 20px; height: 18px; margin-right: 15px; }
.t6 { width: 20px; height: 20px; margin-right: 18px; }
.lang { width: 45px; font-size: 15px; letter-spacing: -.5px; }
.clock { display: flex; flex-direction: column; width: 76px; font-size: 15px; line-height: 23px; text-align: center; letter-spacing: -.23px; }
.notice { position: relative; width: 31px; height: 30px; margin-left: 23px; }
.notice svg { width: 20px; height: 18px; margin-top: 5px; }
.notice span { position: absolute; left: 9px; top: 14px; width: 21px; height: 21px; border: 1px solid #a58a83; border-radius: 50%; background: #441306; font-size: 13px; font-weight: 600; line-height: 19px; letter-spacing: -.4px; text-align: center; }
```
